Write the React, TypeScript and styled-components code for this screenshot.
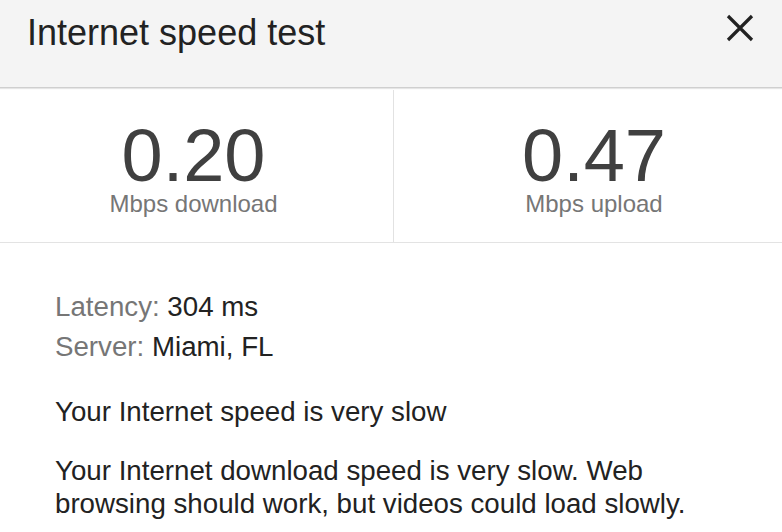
import React from "react";
import styled, { createGlobalStyle } from "styled-components";

const GlobalStyle = createGlobalStyle`
  html, body {
    margin: 0;
    padding: 0;
    background: #ffffff;
  }
  body {
    font-family: "Liberation Sans", Arial, sans-serif;
    -webkit-font-smoothing: antialiased;
  }
`;

const Card = styled.div`
  width: 782px;
  height: 532px;
  overflow: hidden;
  background: #ffffff;
  display: flex;
  flex-direction: column;
`;

const Header = styled.header`
  height: 88px;
  flex: none;
  box-sizing: border-box;
  padding: 13px 28px 0 27px;
  background: #f4f4f4;
  border-bottom: 1px solid #cfcfcf;
  box-shadow: 0 1px 1px rgba(0, 0, 0, 0.1);
  display: flex;
  align-items: flex-start;
  justify-content: space-between;
  position: relative;
  z-index: 1;
`;

const Title = styled.h1`
  margin: 0;
  font-size: 36px;
  line-height: 40px;
  font-weight: 400;
  color: #222222;
  letter-spacing: 0;
`;

const CloseButton = styled.button`
  margin-top: 1px;
  width: 28px;
  height: 28px;
  padding: 0;
  border: 0;
  background: transparent;
  display: flex;
  cursor: pointer;
`;

const Stats = styled.section`
  margin-top: 2px;
  height: 153px;
  flex: none;
  box-sizing: border-box;
  border-bottom: 1px solid #e3e3e3;
  display: grid;
  grid-template-columns: 394px 1fr;
`;

const StatCell = styled.div<{ $side: "left" | "right" }>`
  box-sizing: border-box;
  padding-top: 32px;
  display: flex;
  flex-direction: column;
  align-items: center;
  ${(p) =>
    p.$side === "left"
      ? "padding-right: 6px; border-right: 1px solid #e2e2e2;"
      : "padding-left: 12px;"}
`;

const StatValue = styled.div`
  font-size: 74px;
  line-height: 68px;
  color: #404040;
  font-weight: 400;
`;

const StatLabel = styled.div`
  font-size: 24px;
  line-height: 28px;
  color: #767676;
`;

const Details = styled.section`
  padding: 44px 55px 0 55px;
`;

const InfoRow = styled.div`
  font-size: 27.7px;
  line-height: 40px;
  color: #222222;
`;

const InfoLabel = styled.span`
  color: #767676;
`;

const Message = styled.p<{ $gap: number }>`
  margin: 0;
  font-size: 27.7px;
  line-height: 33px;
  color: #222222;
  margin-top: ${(p) => p.$gap}px;
`;

const CloseIcon = () => (
  <svg width="28" height="28" viewBox="0 0 28 28" aria-hidden="true">
    <path
      d="M2 2 L26 26 M26 2 L2 26"
      stroke="#222222"
      strokeWidth="3.2"
      fill="none"
    />
  </svg>
);

export default function App() {
  return (
    <>
      <GlobalStyle />
      <Card>
        <Header>
          <Title>Internet speed test</Title>
          <CloseButton aria-label="Close">
            <CloseIcon />
          </CloseButton>
        </Header>
        <Stats>
          <StatCell $side="left">
            <StatValue>0.20</StatValue>
            <StatLabel>Mbps download</StatLabel>
          </StatCell>
          <StatCell $side="right">
            <StatValue>0.47</StatValue>
            <StatLabel>Mbps upload</StatLabel>
          </StatCell>
        </Stats>
        <Details>
          <InfoRow>
            <InfoLabel>Latency:</InfoLabel> 304 ms
          </InfoRow>
          <InfoRow>
            <InfoLabel>Server:</InfoLabel> Miami, FL
          </InfoRow>
          <Message $gap={28}>Your Internet speed is very slow</Message>
          <Message $gap={26}>
            Your Internet download speed is very slow. Web browsing should
            work, but videos could load slowly.
          </Message>
        </Details>
      </Card>
    </>
  );
}
